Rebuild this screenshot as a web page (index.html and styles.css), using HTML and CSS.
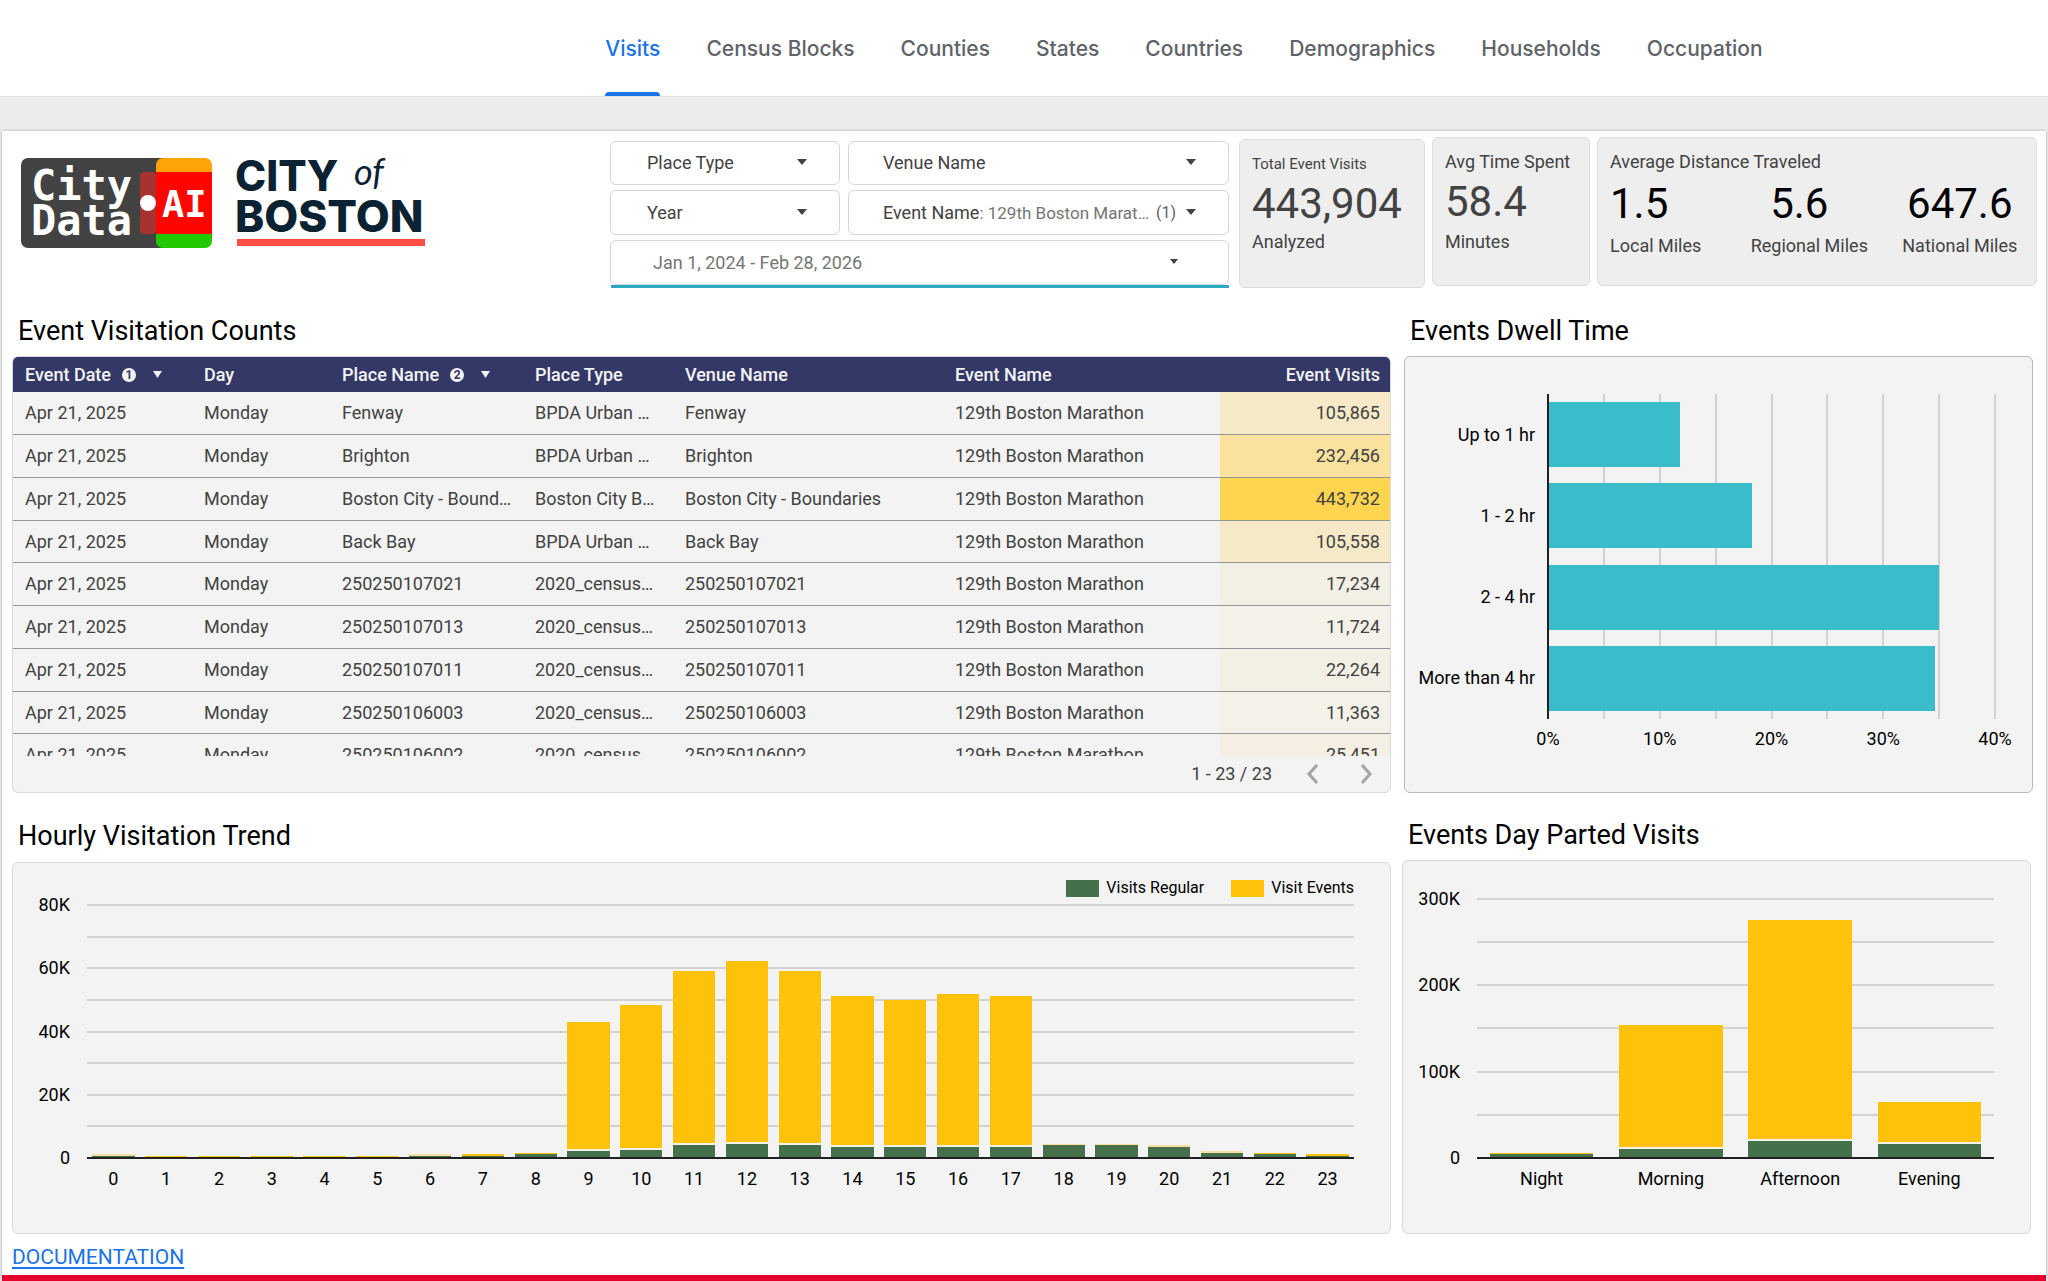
FILE: index.html
```html
<!DOCTYPE html>
<html lang="en">
<head>
<meta charset="utf-8">
<meta name="viewport" content="width=device-width, initial-scale=1">
<title>CityData.AI - City of Boston event visits</title>
<link rel="stylesheet" href="styles.css">
</head>
<body>
<nav class="tabs" aria-label="Report pages">
  <a class="tab tab-active" href="#visits" aria-current="page">Visits</a>
  <a class="tab" href="#census-blocks">Census Blocks</a>
  <a class="tab" href="#counties">Counties</a>
  <a class="tab" href="#states">States</a>
  <a class="tab" href="#countries">Countries</a>
  <a class="tab" href="#demographics">Demographics</a>
  <a class="tab" href="#households">Households</a>
  <a class="tab" href="#occupation">Occupation</a>
</nav>

<main class="report">
  <header class="top">
    <div class="logos">
      <svg class="logo" width="192" height="90" viewBox="0 0 192 90" role="img" aria-label="CityData.AI">
        <rect width="170" height="90" rx="7" fill="#424242"/>
        <path d="M135 7a7 7 0 0 1 7-7h42a7 7 0 0 1 7 7v12h-56z" fill="#ffa406"/>
        <path d="M135 72h56v11a7 7 0 0 1-7 7h-42a7 7 0 0 1-7-7z" fill="#22c800"/>
        <path d="M135 14h56v62h-56z" fill="#ff0500"/>
        <rect x="119" y="14" width="16" height="62" rx="4" fill="#a6332f"/>
        <circle cx="127" cy="45" r="8" fill="#fff"/>
        <text class="mono" x="10" y="42" font-size="42">City</text>
        <text class="mono" x="10" y="77" font-size="42">Data</text>
        <text class="mono" x="141" y="59" font-size="37">AI</text>
      </svg>
      <svg class="logo" width="190" height="90" viewBox="0 0 190 90" role="img" aria-label="City of Boston">
        <text class="boston" x="-2" y="33" font-size="42">CITY</text>
        <text class="of" x="117" y="27" font-size="36">of</text>
        <text class="boston" x="-2" y="74" font-size="44">BOSTON</text>
        <rect y="81" width="188" height="7" fill="#ff4f44"/>
      </svg>
    </div>

    <div class="filters">
      <label class="filter">
        <select aria-label="Place Type"><option>Place Type</option></select>
        <svg class="caret" width="10" height="6" viewBox="0 0 10 6"><path d="M0 0h10L5 6z"/></svg>
      </label>
      <label class="filter filter-wide">
        <select aria-label="Venue Name"><option>Venue Name</option></select>
        <svg class="caret" width="10" height="6" viewBox="0 0 10 6"><path d="M0 0h10L5 6z"/></svg>
      </label>
      <label class="filter">
        <select aria-label="Year"><option>Year</option></select>
        <svg class="caret" width="10" height="6" viewBox="0 0 10 6"><path d="M0 0h10L5 6z"/></svg>
      </label>
      <button class="filter filter-button" type="button" aria-haspopup="listbox">
        <span>Event Name</span><span class="picked">: 129th Boston Marat…</span><span class="count">(1)</span>
        <svg class="caret" width="10" height="6" viewBox="0 0 10 6"><path d="M0 0h10L5 6z"/></svg>
      </button>
      <button class="filter filter-button filter-date" type="button" aria-haspopup="dialog">
        <span>Jan 1, 2024 - Feb 28, 2026</span>
        <svg class="caret" width="8" height="5" viewBox="0 0 10 6"><path d="M0 0h10L5 6z"/></svg>
      </button>
    </div>

    <div class="kpis">
      <section class="kpi kpi-low">
        <h2 class="kpi-name kpi-name-small">Total Event Visits</h2>
        <p class="kpi-value">443,904</p>
        <p class="kpi-unit">Analyzed</p>
      </section>
      <section class="kpi">
        <h2 class="kpi-name">Avg Time Spent</h2>
        <p class="kpi-value">58.4</p>
        <p class="kpi-unit">Minutes</p>
      </section>
      <section class="kpi">
        <h2 class="kpi-name">Average Distance Traveled</h2>
        <div class="distances">
          <div><p class="kpi-value">1.5</p><p class="kpi-unit">Local Miles</p></div>
          <div class="regional"><p class="kpi-value">5.6</p><p class="kpi-unit">Regional Miles</p></div>
          <div><p class="kpi-value">647.6</p><p class="kpi-unit">National Miles</p></div>
        </div>
      </section>
    </div>
  </header>

  <div class="row row-top">
    <section class="wide">
      <h2 class="title">Event Visitation Counts</h2>
      <div class="panel table-panel">
        <div class="table-view">
          <table>
            <colgroup><col class="c-date"><col class="c-day"><col class="c-place"><col class="c-type"><col class="c-venue"><col class="c-event"><col class="c-visits"></colgroup>
            <thead>
              <tr>
                <th scope="col"><button class="sort" type="button">Event Date <span class="order">1</span><svg width="9" height="7" viewBox="0 0 9 7"><path d="M0 0h9L4.500 7z"/></svg></button></th>
                <th scope="col">Day</th>
                <th scope="col"><button class="sort" type="button">Place Name <span class="order">2</span><svg width="9" height="7" viewBox="0 0 9 7"><path d="M0 0h9L4.500 7z"/></svg></button></th>
                <th scope="col">Place Type</th>
                <th scope="col">Venue Name</th>
                <th scope="col">Event Name</th>
                <th scope="col" class="num">Event Visits</th>
              </tr>
            </thead>
            <tbody>
              <tr><td>Apr 21, 2025</td><td>Monday</td><td>Fenway</td><td>BPDA Urban …</td><td>Fenway</td><td>129th Boston Marathon</td><td class="num" style="background:#f6e9c8">105,865</td></tr>
              <tr><td>Apr 21, 2025</td><td>Monday</td><td>Brighton</td><td>BPDA Urban …</td><td>Brighton</td><td>129th Boston Marathon</td><td class="num" style="background:#fae29e">232,456</td></tr>
              <tr><td>Apr 21, 2025</td><td>Monday</td><td>Boston City - Bound…</td><td>Boston City B…</td><td>Boston City - Boundaries</td><td>129th Boston Marathon</td><td class="num" style="background:#ffd44f">443,732</td></tr>
              <tr><td>Apr 21, 2025</td><td>Monday</td><td>Back Bay</td><td>BPDA Urban …</td><td>Back Bay</td><td>129th Boston Marathon</td><td class="num" style="background:#f6e9c8">105,558</td></tr>
              <tr><td>Apr 21, 2025</td><td>Monday</td><td>250250107021</td><td>2020_census…</td><td>250250107021</td><td>129th Boston Marathon</td><td class="num" style="background:#f2f0e4">17,234</td></tr>
              <tr><td>Apr 21, 2025</td><td>Monday</td><td>250250107013</td><td>2020_census…</td><td>250250107013</td><td>129th Boston Marathon</td><td class="num" style="background:#f3f1e8">11,724</td></tr>
              <tr><td>Apr 21, 2025</td><td>Monday</td><td>250250107011</td><td>2020_census…</td><td>250250107011</td><td>129th Boston Marathon</td><td class="num" style="background:#f2f0e4">22,264</td></tr>
              <tr><td>Apr 21, 2025</td><td>Monday</td><td>250250106003</td><td>2020_census…</td><td>250250106003</td><td>129th Boston Marathon</td><td class="num" style="background:#f3f1e8">11,363</td></tr>
              <tr><td>Apr 21, 2025</td><td>Monday</td><td>250250106002</td><td>2020_census…</td><td>250250106002</td><td>129th Boston Marathon</td><td class="num" style="background:#f4efe2">25,451</td></tr>
            </tbody>
          </table>
        </div>
        <div class="pager">
          <span>1 - 23 / 23</span>
          <button class="page-button" type="button" aria-label="Previous page"><svg width="12" height="20" viewBox="0 0 12 20"><path d="M10 1L2 10l8 9"/></svg></button>
          <button class="page-button" type="button" aria-label="Next page"><svg width="12" height="20" viewBox="0 0 12 20"><path d="M2 1l8 9-8 9"/></svg></button>
        </div>
      </div>
    </section>

    <section class="narrow">
      <h2 class="title">Events Dwell Time</h2>
      <div class="panel panel-strong dwell">
        <div class="dwell-names"><span>Up to 1 hr</span><span>1 - 2 hr</span><span>2 - 4 hr</span><span>More than 4 hr</span></div>
        <div class="dwell-plot">
          <div class="vlines"><i></i><i></i><i></i><i></i><i></i><i></i><i></i><i></i><i></i></div>
          <div class="hbars">
            <div style="width:29.6%"></div>
            <div style="width:45.700%"></div>
            <div style="width:87.400%"></div>
            <div style="width:86.400%"></div>
          </div>
        </div>
        <div class="dwell-scale"><span>0%</span><span>10%</span><span>20%</span><span>30%</span><span>40%</span></div>
      </div>
    </section>
  </div>

  <div class="row row-bottom">
    <section class="wide">
      <h2 class="title">Hourly Visitation Trend</h2>
      <div class="panel stack hourly">
        <div class="legend"><span class="key key-regular">Visits Regular</span><span class="key key-events">Visit Events</span></div>
        <div class="y-scale"><span>80K</span><span>60K</span><span>40K</span><span>20K</span><span>0</span></div>
        <div class="plot">
          <div class="hlines"><i></i><i></i><i></i><i></i><i></i><i></i><i></i><i></i><i></i></div>
          <div class="vbars">
            <div class="bar faint" style="height:1.4%"><b style="height:60%"></b></div>
            <div class="bar" style="height:0.8%"><b style="height:50%"></b></div>
            <div class="bar" style="height:0.8%"><b style="height:50%"></b></div>
            <div class="bar" style="height:0.8%"><b style="height:50%"></b></div>
            <div class="bar" style="height:0.8%"><b style="height:50%"></b></div>
            <div class="bar" style="height:0.8%"><b style="height:50%"></b></div>
            <div class="bar faint" style="height:1.4%"><b style="height:60%"></b></div>
            <div class="bar" style="height:1.4%"><b style="height:70%"></b></div>
            <div class="bar" style="height:1.8%"><b style="height:80%"></b></div>
            <div class="bar split" style="height:53.6%"><b style="height:6.300%"></b></div>
            <div class="bar split" style="height:60.100%"><b style="height:6.500%"></b></div>
            <div class="bar split" style="height:73.500%"><b style="height:7.800%"></b></div>
            <div class="bar split" style="height:77.700%"><b style="height:8.100%"></b></div>
            <div class="bar split" style="height:73.500%"><b style="height:7.800%"></b></div>
            <div class="bar split" style="height:63.600%"><b style="height:8.100%"></b></div>
            <div class="bar split" style="height:62.300%"><b style="height:8.200%"></b></div>
            <div class="bar split" style="height:64.600%"><b style="height:8%"></b></div>
            <div class="bar split" style="height:63.600%"><b style="height:8.100%"></b></div>
            <div class="bar faint" style="height:5.500%"><b style="height:92%"></b></div>
            <div class="bar faint" style="height:5.500%"><b style="height:92%"></b></div>
            <div class="bar faint" style="height:5%"><b style="height:90%"></b></div>
            <div class="bar faint" style="height:2.700%"><b style="height:80%"></b></div>
            <div class="bar" style="height:1.8%"><b style="height:80%"></b></div>
            <div class="bar" style="height:1.4%"><b style="height:66%"></b></div>
          </div>
        </div>
        <div class="x-scale"><span>0</span><span>1</span><span>2</span><span>3</span><span>4</span><span>5</span><span>6</span><span>7</span><span>8</span><span>9</span><span>10</span><span>11</span><span>12</span><span>13</span><span>14</span><span>15</span><span>16</span><span>17</span><span>18</span><span>19</span><span>20</span><span>21</span><span>22</span><span>23</span></div>
      </div>
    </section>

    <section class="narrow">
      <h2 class="title">Events Day Parted Visits</h2>
      <div class="panel stack parts">
        <div class="y-scale"><span>300K</span><span>200K</span><span>100K</span><span>0</span></div>
        <div class="plot">
          <div class="hlines"><i></i><i></i><i></i><i></i><i></i><i></i><i></i></div>
          <div class="vbars">
            <div class="bar" style="height:1.8%"><b style="height:80%"></b></div>
            <div class="bar split" style="height:51.200%"><b style="height:8.600%"></b></div>
            <div class="bar split" style="height:91.500%"><b style="height:8%"></b></div>
            <div class="bar split" style="height:21.600%"><b style="height:28%"></b></div>
          </div>
        </div>
        <div class="x-scale"><span>Night</span><span>Morning</span><span>Afternoon</span><span>Evening</span></div>
      </div>
    </section>
  </div>

  <footer class="foot"><a class="docs" href="#documentation">DOCUMENTATION</a></footer>
</main>
</body>
</html>
```

FILE: styles.css
```css
* { box-sizing: border-box; }

body {
  margin: 0;
  background: #ececec;
  color: #424242;
  font: 18px/24px Roboto, "Liberation Sans", sans-serif;
}

h2, p { margin: 0; font-weight: 400; }

button, select {
  font: inherit;
  color: inherit;
  background: none;
  border: 0;
  padding: 0;
  text-align: left;
}

i { display: block; }

/* Page tabs */
.tabs {
  display: flex;
  justify-content: center;
  gap: 46px;
  height: 97px;
  padding-left: 320px;
  background: #fff;
  border-bottom: 1px solid #e2e2e2;
}

.tab {
  display: flex;
  align-items: center;
  position: relative;
  padding-top: 2px;
  color: #5f6368;
  font-family: Inter, Roboto, sans-serif;
  font-size: 21px;
  font-weight: 500;
  text-decoration: none;
  white-space: nowrap;
}

.tab-active { color: #1a73e8; }

.tab-active::after {
  content: "";
  position: absolute;
  left: 0;
  right: 0;
  bottom: 0;
  height: 4px;
  border-radius: 4px 4px 0 0;
  background: #1a73e8;
}

/* Report sheet */
.report {
  margin: 34px 2px 0;
  padding: 0 9px 0 10px;
  background: #fff;
  box-shadow: 0 0 3px rgba(0, 0, 0, .3);
  border-bottom: 6px solid #e4002b;
}

.top {
  display: grid;
  grid-template-columns: 597fr 620fr 808fr;
  height: 171px;
}

.logos {
  display: flex;
  gap: 24px;
  padding: 27px 0 0 9px;
}

.logo { flex: none; overflow: visible; }
.mono { font-family: "DejaVu Sans Mono", monospace; font-weight: 700; fill: #fff; }
.boston { font-family: Inter, sans-serif; font-weight: 800; fill: #0b2233; }
.of { font-family: Lato, sans-serif; font-style: italic; fill: #0b2233; }

/* Filters */
.filters {
  display: grid;
  grid-template-columns: 230fr 381fr;
  grid-template-rows: 44px 45px 45px;
  gap: 5px 8px;
  align-content: start;
  padding: 10px 0 0 1px;
}

.filter {
  display: flex;
  align-items: center;
  position: relative;
  min-width: 0;
  border: 1px solid #d6d6d6;
  border-radius: 6px;
  background: #fff;
}

.filter select {
  width: 100%;
  height: 100%;
  padding-left: 36px;
  appearance: none;
}

.filter-wide select { padding-left: 34px; }

.caret {
  position: absolute;
  right: 32px;
  top: 50%;
  margin-top: -4px;
  fill: #424242;
}

.filter-button {
  padding-left: 34px;
  white-space: nowrap;
}

.picked { color: #757575; font-size: 17px; }
.count { font-size: 16px; color: #5f5f5f; margin-left: 7px; }

.filter-date {
  grid-column: 1 / -1;
  padding-left: 42px;
  color: #757575;
}

.filter-date::after {
  content: "";
  position: absolute;
  left: 0;
  right: -1px;
  bottom: -4px;
  height: 3px;
  background: #2baabf;
}

.filter-date .caret { right: 50px; }

/* Headline figures */
.kpis {
  display: grid;
  grid-template-columns: 186fr 158fr 440fr;
  gap: 7px;
  align-items: start;
  padding: 6px 0 0 10px;
}

.kpi {
  height: 149px;
  padding: 12px 12px 0;
  border: 1px solid #dcdcdc;
  border-radius: 6px;
  background: #eee;
  white-space: nowrap;
}

.kpi-low { margin-top: 2px; }
.kpi-low .kpi-unit { margin-top: -2px; }
.kpi-name { font-size: 18px; }
.kpi-name-small { font-size: 15px; }
.kpi-value { font-size: 42px; line-height: 56px; }

.distances {
  display: grid;
  grid-template-columns: 141fr 152fr 122fr;
}

.distances .kpi-value { color: #000; line-height: 60px; }
.distances div + div { justify-self: start; text-align: center; }
.distances .regional .kpi-value { padding-right: 20px; }

/* Sections */
.row { display: flex; }
.row-top { gap: 13px; padding-right: 4px; }
.row-bottom { gap: 11px; padding-right: 6px; }
.wide { flex: 1379 1 0; min-width: 0; }
.narrow { flex: 629 1 0; min-width: 0; }

.title {
  padding: 11px 0 7px 6px;
  color: #000;
  font-size: 27px;
  line-height: 36px;
}

.row-bottom .title { padding: 25px 0 8px 6px; }
.row-bottom .narrow .title { padding: 24px 0 7px 6px; }

.panel {
  border: 1px solid #d9d9d9;
  border-radius: 6px;
  background: #f3f3f3;
}

.panel-strong { border-color: #b9b9b9; }

/* Table */
.table-panel { height: 437px; overflow: hidden; }
.table-view { height: 399px; overflow: hidden; }

table {
  width: 100%;
  table-layout: fixed;
  border-collapse: separate;
  border-spacing: 0;
}

.c-date { width: 179px; }
.c-day { width: 138px; }
.c-place { width: 193px; }
.c-type { width: 150px; }
.c-venue { width: 270px; }
.c-event { width: 277px; }
.c-visits { width: 170px; }

th, td {
  padding: 0 0 0 12px;
  text-align: left;
  white-space: nowrap;
}

th {
  height: 35px;
  background: #333866;
  color: #f3f3f3;
  font-weight: 500;
}

td {
  height: 43px;
  border-bottom: 1px solid #959595;
}

tr:nth-child(4n) td { height: 42px; }
th.num, td.num { padding-right: 10px; text-align: right; }

.sort { display: flex; align-items: center; font-weight: 500; }
.sort svg { fill: #f3f3f3; margin-left: 17px; }

.order {
  width: 14px;
  height: 14px;
  margin-left: 11px;
  border-radius: 7px;
  background: #f3f3f3;
  color: #333866;
  font-size: 12px;
  font-weight: 700;
  line-height: 14px;
  text-align: center;
}

.pager {
  display: flex;
  align-items: center;
  height: 36px;
  justify-content: flex-end;
  padding-right: 18px;
}

.page-button { display: flex; margin-left: 41px; }
.pager span + .page-button { margin-left: 35px; }
.page-button path { fill: none; stroke: #a3a3a3; stroke-width: 3; }

/* Dwell time chart */
.dwell {
  display: grid;
  grid-template-columns: 142px 1fr;
  grid-template-rows: 325px auto;
  height: 437px;
  padding: 37px 36px 0 0;
  color: #000;
}

.dwell-names {
  display: grid;
  grid-template-rows: repeat(4, 1fr);
  align-items: center;
  justify-items: end;
  padding-right: 12px;
  white-space: nowrap;
}

.dwell-plot { display: grid; }
.dwell-plot > *, .plot > * { grid-area: 1 / 1; min-height: 0; }

.vlines { display: flex; justify-content: space-between; }
.vlines i { width: 2px; background: #d2d2d2; }
.vlines i:first-child { position: relative; z-index: 1; background: #212121; }

.hbars {
  display: grid;
  grid-template-rows: repeat(4, 65px);
  align-content: space-around;
}

.hbars div { background: #3abccb; }

.dwell-scale {
  grid-column: 2;
  display: flex;
  justify-content: space-between;
  margin: 8px -20px 0;
}

.dwell-scale span { width: 42px; text-align: center; }

/* Stacked column charts */
.stack {
  display: grid;
  color: #000;
}

.hourly {
  grid-template-columns: 74px 1fr;
  grid-template-rows: 41px 255px auto;
  height: 372px;
  padding-right: 36px;
}

.parts {
  grid-template-columns: 74px 1fr;
  grid-template-rows: 261px auto;
  height: 374px;
  padding: 37px 36px 0 0;
}

.legend {
  grid-column: 1 / -1;
  display: flex;
  justify-content: flex-end;
  gap: 27px;
  padding-top: 13px;
  font-size: 16px;
}

.key { display: flex; align-items: center; gap: 7px; height: 24px; }
.key::before { content: ""; width: 33px; height: 17px; }
.key-regular::before { background: #44704b; }
.key-events::before { background: #ffc20a; }

.y-scale {
  display: flex;
  flex-direction: column;
  justify-content: space-between;
  align-items: flex-end;
  margin: -11px 0;
  padding-right: 17px;
}

.plot { display: grid; }

.hlines { display: flex; flex-direction: column; justify-content: space-between; }
.hlines i { height: 2px; background: #d2d2d2; }
.hlines i:last-child { position: relative; z-index: 1; background: #212121; }

.vbars {
  display: grid;
  grid-auto-flow: column;
  grid-auto-columns: 1fr;
  align-items: end;
  padding-bottom: 1px;
}

.bar {
  display: flex;
  align-items: flex-end;
  margin: 0 10%;
  background: #ffc20a;
}

.bar b { width: 100%; background: #44704b; }
.faint { background: #f8dfa0; }
.split b { border-top: 2px solid #f5f1e4; }

.x-scale {
  grid-column: 2;
  display: grid;
  grid-auto-flow: column;
  grid-auto-columns: 1fr;
  align-items: start;
  padding-top: 8px;
  text-align: center;
}

.foot { height: 41px; padding-top: 11px; }
.docs { color: #1a73e8; font-size: 21px; text-underline-offset: 3px; text-decoration-thickness: 2px; }
```
